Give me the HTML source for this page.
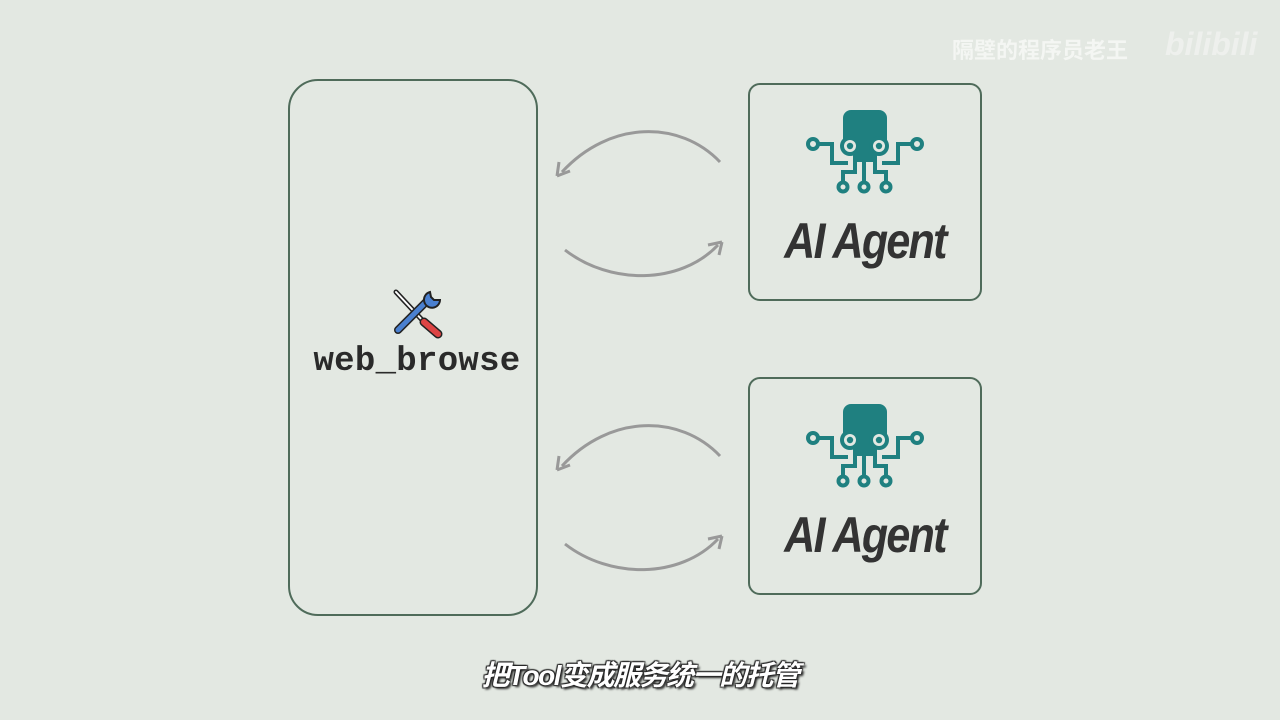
<!DOCTYPE html>
<html><head><meta charset="utf-8"><style>
body{margin:0;width:1280px;height:720px;background:#e3e8e2;position:relative;overflow:hidden;font-family:"Liberation Sans","Noto Sans CJK SC",sans-serif}
.box{position:absolute;border:2.5px solid #4f6b5a;box-sizing:border-box}
.ag{position:absolute;left:748px;width:234px;text-align:center;font:italic bold 50px "Liberation Sans",sans-serif;color:#333;letter-spacing:-2px;transform:scaleX(0.86)}
</style></head><body>
<div class="box" style="left:288px;top:79px;width:250px;height:537px;border-radius:30px"></div>
<div class="box" style="left:748px;top:83px;width:234px;height:218px;border-radius:12px"></div>
<div class="box" style="left:748px;top:377px;width:234px;height:218px;border-radius:12px"></div>
<div style="position:absolute;left:288px;width:258px;top:343px;text-align:center;font:bold 34px 'Liberation Mono',monospace;color:#2a2a2a;letter-spacing:0.3px">web_browse</div>
<div class="ag" style="top:212px">AI Agent</div>
<div class="ag" style="top:506px">AI Agent</div>
<svg width="1280" height="720" style="position:absolute;left:0;top:0">
<defs><g id="bot" fill="none" stroke="#1f8080" stroke-width="4">
<path d="M843 150V118a8 8 0 0 1 8-8h28a8 8 0 0 1 8 8v32z" fill="#1f8080" stroke="none"/>
<rect x="853" y="140" width="24" height="22" fill="#1f8080" stroke="none"/>
<circle cx="850" cy="146" r="10" fill="#1f8080" stroke="none"/><circle cx="879" cy="146" r="10" fill="#1f8080" stroke="none"/>
<circle cx="850" cy="146" r="6" fill="#e3e8e2" stroke="none"/><circle cx="879" cy="146" r="6" fill="#e3e8e2" stroke="none"/>
<circle cx="850" cy="146" r="3.2" fill="#1f8080" stroke="none"/><circle cx="879" cy="146" r="3.2" fill="#1f8080" stroke="none"/>
<circle cx="813" cy="144" r="5"/><circle cx="917" cy="144" r="5"/>
<circle cx="843" cy="187" r="4.5"/><circle cx="864" cy="187" r="4.5"/><circle cx="886" cy="187" r="4.5"/>
<path d="M818 144H832V163H848"/><path d="M912 144H898V163H882"/>
<path d="M855 158V172H843V182"/><path d="M864 158V182"/><path d="M875 158V172H886V182"/>
</g>
<g id="arr" fill="none" stroke="#999" stroke-width="3">
<path d="M720 162C680 120 610 120 562 172"/><path d="M557 176l2-14M557 176l13-5"/>
<path d="M565 250C610 285 680 285 718 245"/><path d="M722 242l-14 3M722 242l-3 13"/>
</g></defs>
<use href="#bot"/><use href="#bot" y="294"/>
<use href="#arr"/><use href="#arr" y="294"/>
<g stroke-linecap="round">
<path d="M396 292l28 30" stroke="#222" stroke-width="5"/><path d="M396 292l28 30" stroke="#fff" stroke-width="2"/>
<path d="M424 322l14 12" stroke="#222" stroke-width="9"/><path d="M424 322l14 12" stroke="#d44" stroke-width="6"/>
<path d="M398 330l30-30" stroke="#222" stroke-width="8"/><path d="M398 330l30-30" stroke="#4a80d0" stroke-width="5"/>
<path d="M430 292a8 8 0 1 0 10 8l-6 0-3-3z" fill="#4a80d0" stroke="#222" stroke-width="2"/>
</g>
</svg>
<div style="position:absolute;left:952px;top:33px;font-size:22px;color:#f4f6f3;font-weight:bold">隔壁的程序员老王</div>
<div style="position:absolute;left:1165px;top:26px;font:bold italic 32px 'Liberation Sans',sans-serif;color:#eef0ed">bilibili</div>
<div style="position:absolute;left:0;width:1280px;top:654px;text-align:center;font-size:28px;font-weight:bold;font-style:italic;color:#fff;letter-spacing:-1.5px;text-shadow:2px 2px 2px #222,-1px -1px 1px #222,1px -1px 1px #222,-1px 1px 1px #222">把Tool变成服务统一的托管</div>
</body></html>
